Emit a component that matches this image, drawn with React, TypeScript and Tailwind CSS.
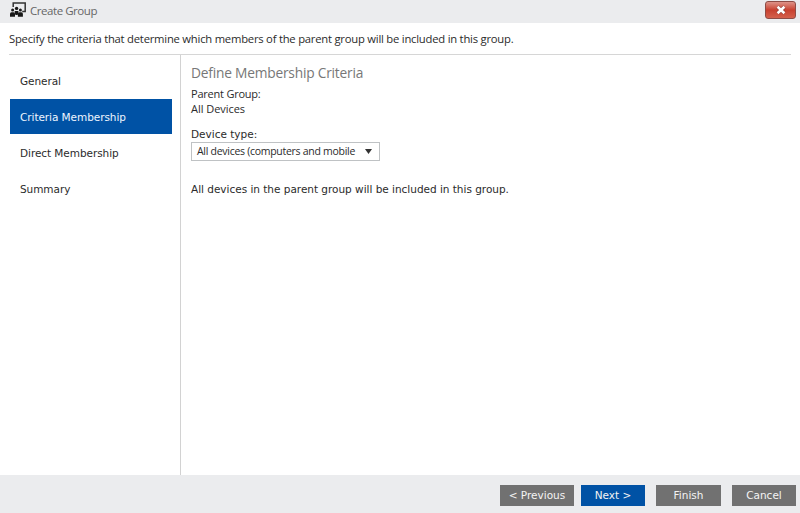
import React from "react";

const segoe = "font-['Open_Sans','Noto_Sans',sans-serif]";
const verdana = "font-['DejaVu_Sans',sans-serif]";

function GroupIcon() {
  return (
    <svg width="16" height="15" viewBox="0 0 16 15" className="shrink-0">
      <path d="M3.2 5V1h12v8.5h-3" fill="none" stroke="#333" strokeWidth="1.5" />
      <g fill="#181818">
        <circle cx="2.6" cy="7.9" r="1.5" />
        <circle cx="6.6" cy="6.4" r="1.7" />
        <circle cx="10.4" cy="7.9" r="1.5" />
        <path d="M0 14.8v-2.9q0-1.6 1.5-1.6h2q1.5 0 1.5 1.6v2.9z" />
        <path d="M4.7 8.9h3.7v3l-1.1 1.2H5.8l-1.1-1.2z" />
        <path d="M7.9 14.8v-2.9q0-1.6 1.5-1.6h2q1.5 0 1.5 1.6v2.9z" />
      </g>
    </svg>
  );
}

const steps = [
  { label: "General", style: "text-[#2b2b2b]" },
  { label: "Criteria Membership", style: "bg-[#0052a5] text-[#eef5ff]" },
  { label: "Direct Membership", style: "text-[#2b2b2b]" },
  { label: "Summary", style: "text-[#2b2b2b]" },
];

const buttons = [
  { label: "< Previous", style: "w-[74px] bg-[#717171]" },
  { label: "Next >", style: "ml-[7px] w-16 bg-[#0052a5]" },
  { label: "Finish", style: "ml-[11px] w-[65px] bg-[#717171]" },
  { label: "Cancel", style: "ml-[11px] w-16 bg-[#717171]" },
];

export default function App() {
  return (
    <div className={`flex h-[513px] w-[800px] flex-col overflow-hidden whitespace-nowrap bg-white text-[#2b2b2b] ${segoe}`}>
      <header className="flex h-[23px] shrink-0 items-start bg-[#ebecee] pl-[10px] pr-[4px]">
        <div className="pt-[2px]">
          <GroupIcon />
        </div>
        <h1 className="ml-1 pt-[2px] text-[11.5px] leading-[17px] tracking-[-0.45px] text-[#666]">Create Group</h1>
        <button
          aria-label="Close"
          className="ml-auto mt-px flex h-[18px] w-[31px] items-center justify-center rounded-[3px] border border-[#8e4c45] bg-linear-to-b from-[#dd9288] via-[#c8402f] via-50% to-[#d4604c]"
        >
          <svg width="12" height="10" viewBox="0 0 12 10">
            <path d="M2.6 1.8l6.8 6.4M9.4 1.8L2.6 8.2" stroke="#8a3a32" strokeWidth="3.8" />
            <path d="M2.6 1.8l6.8 6.4M9.4 1.8L2.6 8.2" stroke="#fff" strokeWidth="2.6" />
          </svg>
        </button>
      </header>
      <p className="mx-[9px] h-8 shrink-0 border-b border-[#d6d6d6] pt-[7px] text-[11.25px] leading-[17px] tracking-[-0.225px]">
        Specify the criteria that determine which members of the parent group will be included in this group.
      </p>
      <div className="flex min-h-0 flex-1">
        <nav className={`flex w-[181px] shrink-0 flex-col gap-px border-r border-[#d2d2d2] pl-[10px] pr-[8.5px] pt-2 text-[10.5px] tracking-[-0.06px] ${verdana}`}>
          {steps.map((s) => (
            <div key={s.label} className={`flex h-[35px] items-center pl-[10px] pt-[2px] ${s.style}`}>
              {s.label}
            </div>
          ))}
        </nav>
        <main className="flex flex-col items-start pl-[10px] pt-2">
          <h2 className="text-[13.75px] leading-5 tracking-[-0.21px] text-[#777]">Define Membership Criteria</h2>
          <div className="mt-[3px] text-[11px] leading-[15px]">
            <div className="tracking-[-0.22px]">Parent Group:</div>
            <div className="tracking-[-0.04px]">All Devices</div>
          </div>
          <label className={`mt-[11px] text-[10.5px] leading-[15px] ${verdana}`}>Device type:</label>
          <button className="flex h-[19px] w-[189px] items-center border border-[#bfc2c4] pl-[5px] pr-[7px] text-[10.5px] tracking-[-0.28px]">
            All devices (computers and mobile
            <svg width="7" height="5" viewBox="0 0 7 5" className="ml-auto shrink-0">
              <path d="M0 0h7L3.5 5z" fill="#333" />
            </svg>
          </button>
          <p className={`mt-[21px] text-[10.5px] leading-[15px] tracking-[-0.02px] ${verdana}`}>
            All devices in the parent group will be included in this group.
          </p>
        </main>
      </div>
      <footer className={`flex h-[38px] shrink-0 justify-end bg-[#ebecee] pr-[4px] pt-[10px] text-[10.5px] text-[#f4f4f4] ${verdana}`}>
        {buttons.map((b) => (
          <button key={b.label} className={`flex h-[21px] items-center justify-center ${b.style}`}>
            {b.label}
          </button>
        ))}
      </footer>
    </div>
  );
}
